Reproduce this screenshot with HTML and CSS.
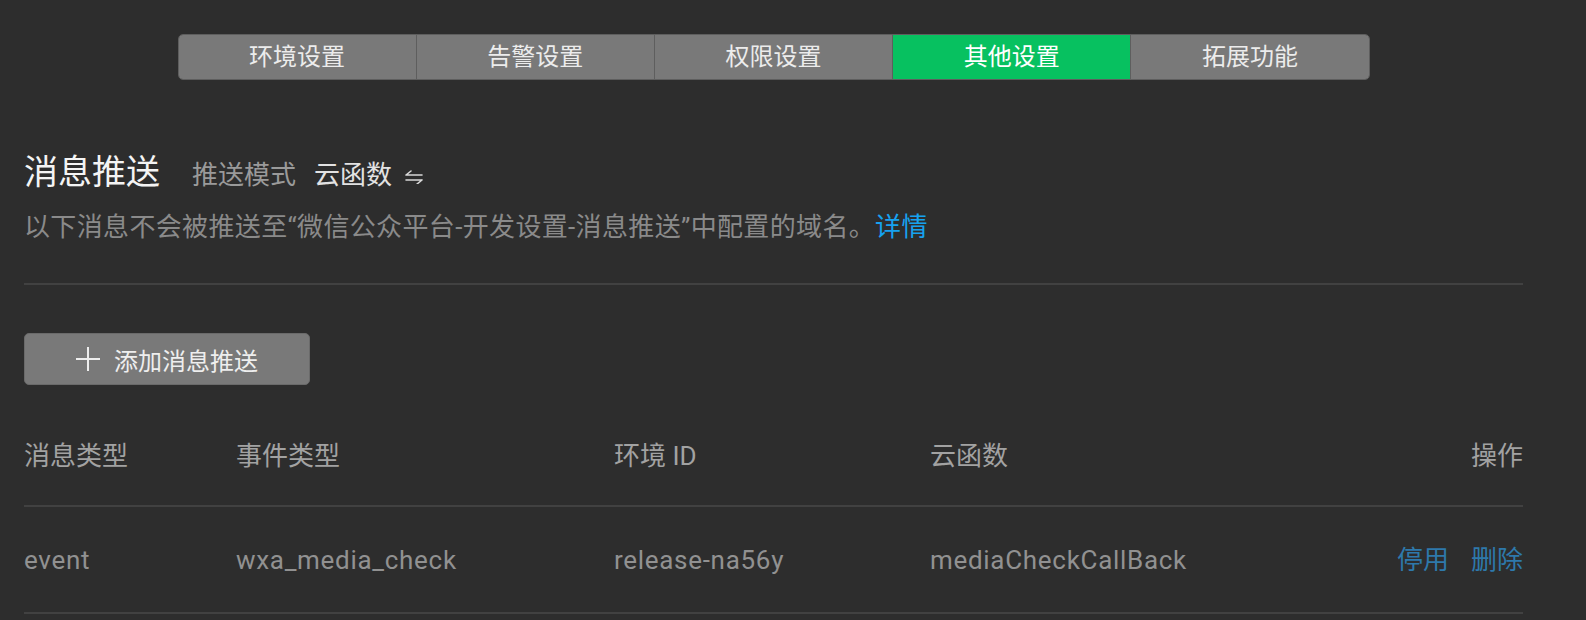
FILE: index.html
```html
<!DOCTYPE html>
<html lang="zh-CN">
<head>
  <meta charset="UTF-8" />
  <meta name="viewport" content="width=device-width, initial-scale=1.0" />
  <title>其他设置</title>
  <link rel="stylesheet" href="styles.css">
</head>
<body>
  <div class="page">
    <nav class="tabs">
      <button class="tab">环境设置</button>
      <button class="tab">告警设置</button>
      <button class="tab">权限设置</button>
      <button class="tab active">其他设置</button>
      <button class="tab">拓展功能</button>
    </nav>

    <section class="push">
      <div class="push-head">
        <h2 class="push-title">消息推送</h2>
        <span class="mode-label">推送模式</span>
        <span class="mode-value">云函数</span>
        <svg class="mode-switch" width="20" height="14" viewBox="0 0 20 14">
          <path d="M2 5 H18 M2 5 L7 1 M2 10 H18 M18 10 L13 14" fill="none" stroke="#d8d8d8" stroke-width="1.6" stroke-linecap="round" />
        </svg>
      </div>
      <p class="desc">以下消息不会被推送至“微信公众平台-开发设置-消息推送”中配置的域名。<a href="#" class="link">详情</a></p>

      <div class="divider"></div>

      <button class="add-btn">
        <svg width="24" height="24" viewBox="0 0 24 24">
          <path d="M12 0 V24 M0 12 H24" stroke="#eeeeee" stroke-width="2" />
        </svg>
        <span>添加消息推送</span>
      </button>

      <table class="push-table">
        <colgroup>
          <col class="c-msg" />
          <col class="c-event" />
          <col class="c-env" />
          <col class="c-fn" />
          <col />
        </colgroup>
        <thead>
          <tr>
            <th>消息类型</th>
            <th>事件类型</th>
            <th>环境 ID</th>
            <th>云函数</th>
            <th class="ops">操作</th>
          </tr>
        </thead>
        <tbody>
          <tr>
            <td>event</td>
            <td>wxa_media_check</td>
            <td>release-na56y</td>
            <td>mediaCheckCallBack</td>
            <td class="ops"><a href="#" class="op">停用</a><a href="#" class="op">删除</a></td>
          </tr>
        </tbody>
      </table>
    </section>
  </div>
</body>
</html>
```

FILE: styles.css
```css
body {
  margin: 0;
  background-color: #2d2d2d;
  color: #e0e0e0;
  font-family: Roboto, 'Noto Sans CJK SC', sans-serif;
}
.page {
  padding: 34px 63px 0 24px;
}

/* top tabs */
.tabs {
  display: flex;
  width: 1192px;
  height: 46px;
  margin: 0 auto;
  border: 1px solid #5e5e5e;
  border-radius: 5px;
  overflow: hidden;
  box-sizing: border-box;
}
.tab {
  flex: 1;
  border: none;
  border-left: 1px solid #5e5e5e;
  background-color: #797979;
  color: #ececec;
  font-family: inherit;
  font-size: 24px;
  line-height: 44px;
  padding: 0;
  cursor: pointer;
}
.tab:first-child {
  border-left: none;
}
.tab.active {
  background-color: #07c160;
  color: #ffffff;
}

/* section header */
.push-head {
  display: flex;
  align-items: baseline;
  margin-top: 68px;
}
.push-title {
  margin: 0;
  font-size: 34px;
  font-weight: normal;
  line-height: 48px;
  color: #f4f4f4;
}
.mode-label {
  margin-left: 32px;
  font-size: 26px;
  color: #9a9a9a;
}
.mode-value {
  margin-left: 18px;
  font-size: 26px;
  color: #e2e2e2;
}
.mode-switch {
  margin-left: 12px;
}
.desc {
  margin: 13px 0 0;
  font-size: 26px;
  line-height: 36px;
  letter-spacing: 0.35px;
  color: #8a8a8a;
}
.link {
  color: #16a2f0;
  text-decoration: none;
}
.divider {
  height: 2px;
  margin-top: 38px;
  background-color: #414141;
}

/* add button */
.add-btn {
  display: flex;
  align-items: center;
  justify-content: center;
  gap: 14px;
  width: 286px;
  height: 52px;
  margin-top: 48px;
  border: 1px solid #6a6a6a;
  border-radius: 5px;
  background-color: #797979;
  color: #eeeeee;
  font-family: inherit;
  font-size: 24px;
  cursor: pointer;
}

/* table */
.push-table {
  width: 100%;
  margin-top: 30px;
  border-collapse: collapse;
  table-layout: fixed;
}
.c-msg { width: 212px; }
.c-event { width: 378px; }
.c-env { width: 316px; }
.c-fn { width: 400px; }
.push-table th,
.push-table td {
  padding: 0;
  text-align: left;
  font-size: 26px;
  line-height: 36px;
  font-weight: normal;
}
.push-table th {
  padding: 23px 0 31px;
  color: #a2a2a2;
  border-bottom: 2px solid #414141;
}
.push-table td {
  padding: 35px 0 34px;
  color: #919191;
  letter-spacing: 0.7px;
  border-bottom: 2px solid #414141;
}
.push-table .ops {
  text-align: right;
  letter-spacing: 0;
}
.op {
  margin-left: 22px;
  color: #2e79ab;
  text-decoration: none;
}
```
